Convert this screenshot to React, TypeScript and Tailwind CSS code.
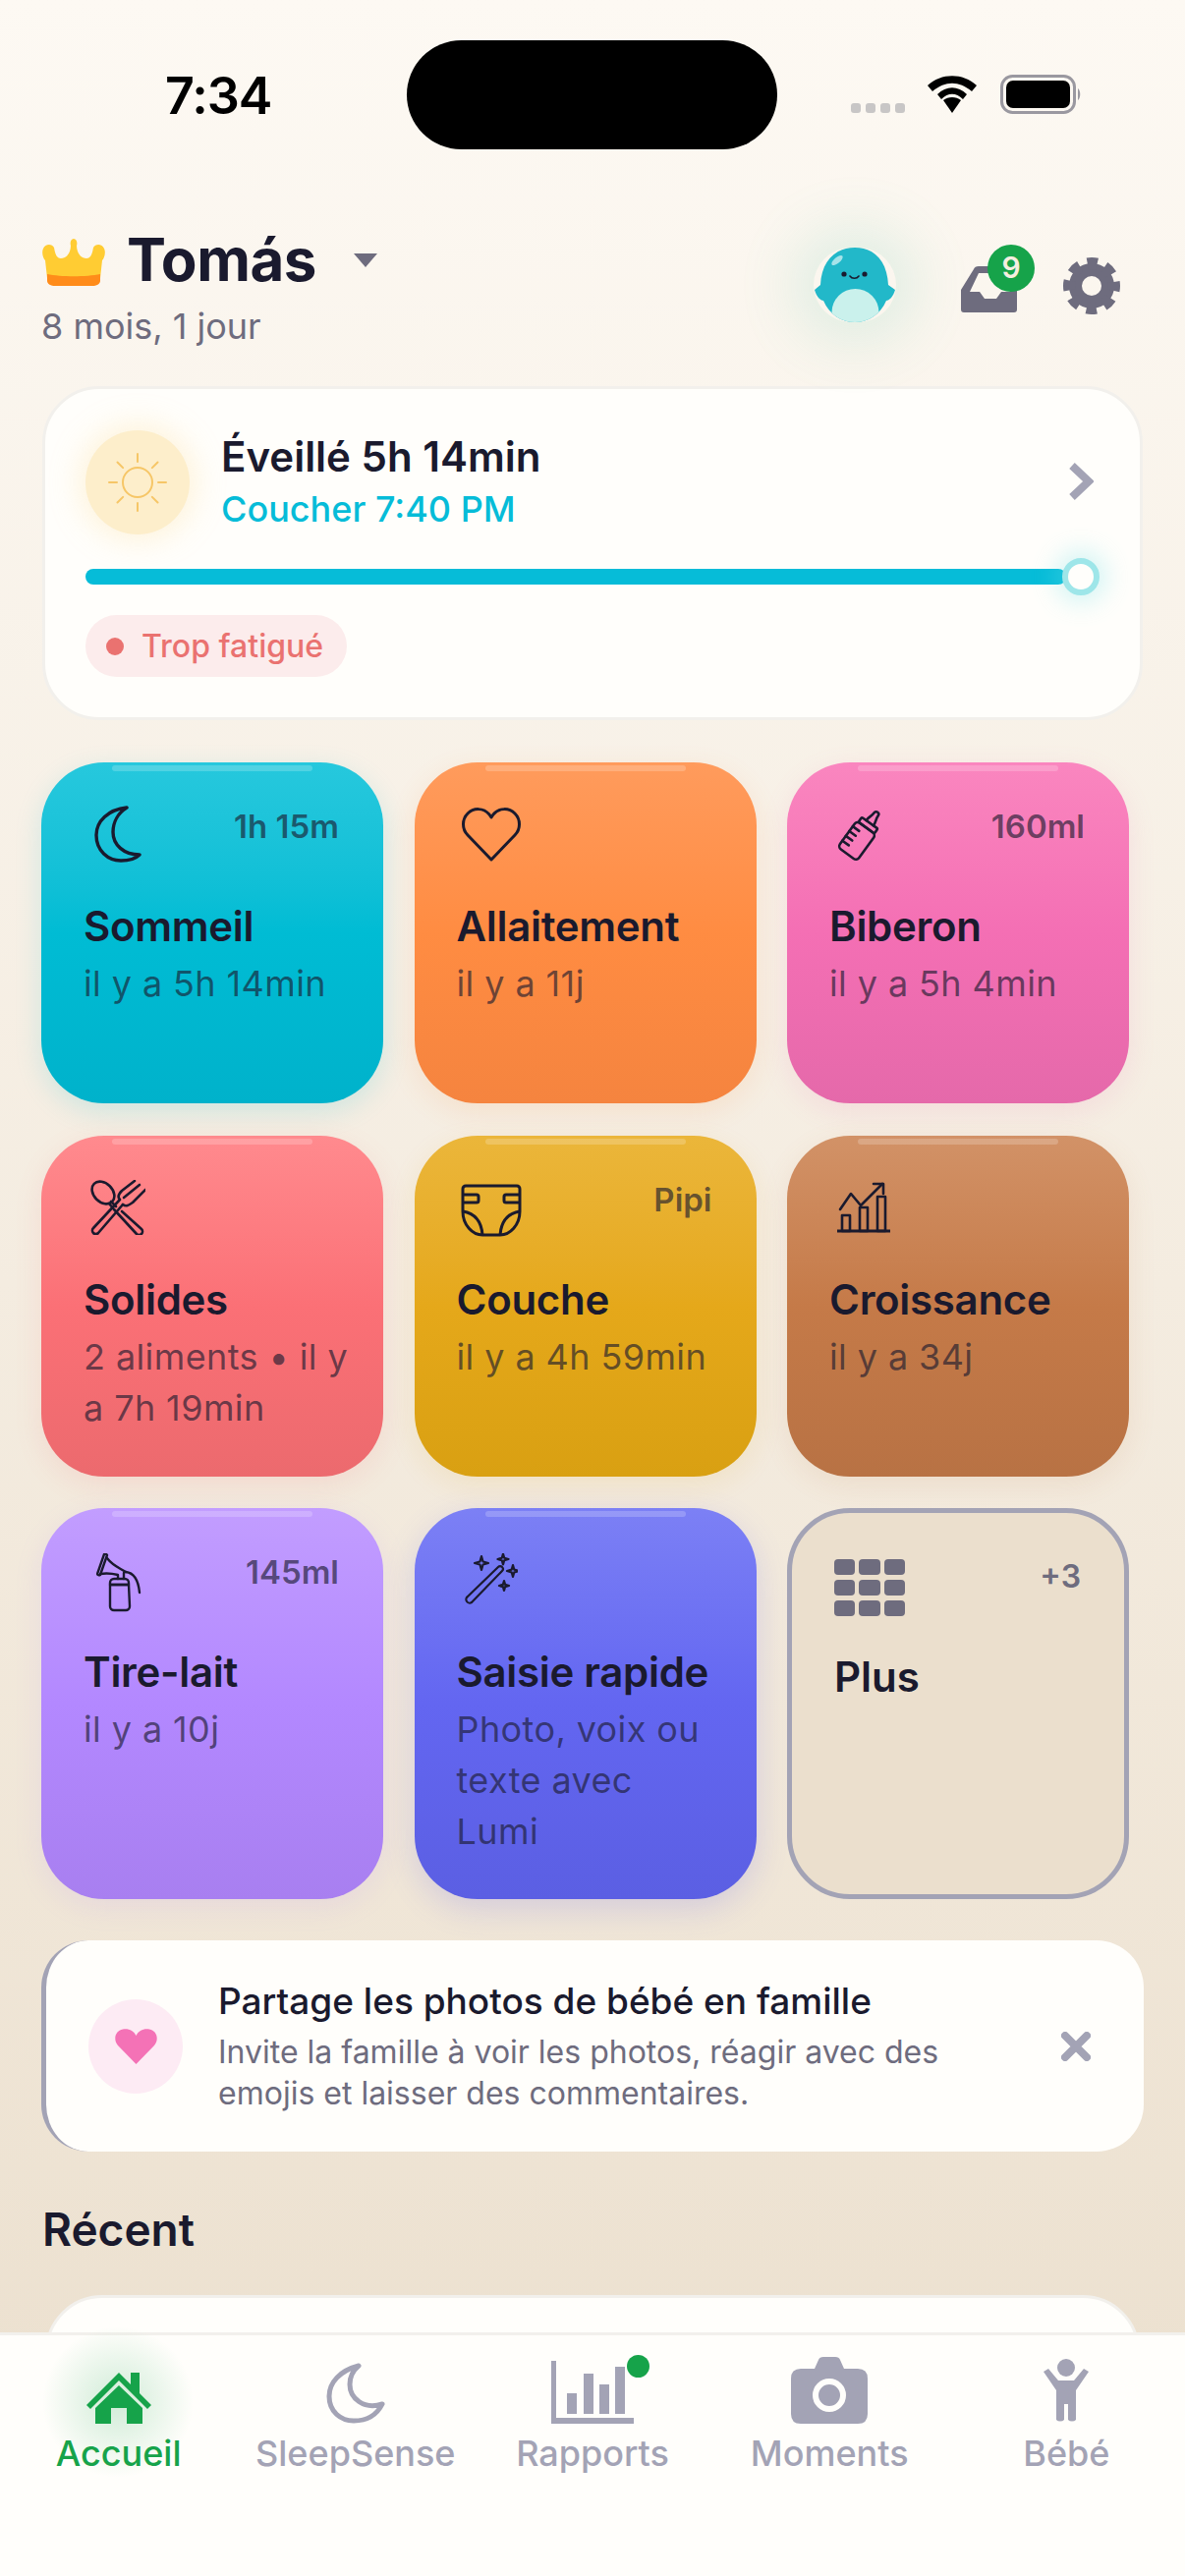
import React from 'react';

const ink = '#1a1a2e';

function Wifi() {
  return (
    <svg width="50" height="38" viewBox="0 0 50 38">
      <path d="M25 38 L16 25 C21 21 29 21 34 25 Z" fill="#000" />
      <path d="M10 19 C19 10 31 10 40 19 L36 24 C29 17 21 17 14 24 Z" fill="#000" />
      <path d="M0 10 C14 -3 36 -3 50 10 L45 16 C32 5 18 5 5 16 Z" fill="#000" />
    </svg>
  );
}

function Battery() {
  return (
    <svg width="82" height="40" viewBox="0 0 82 40">
      <rect x="1.5" y="1.5" width="74" height="37" rx="11" fill="none" stroke="#9a98a0" strokeWidth="3" />
      <rect x="6" y="6" width="65" height="28" rx="7" fill="#000" />
      <path d="M79 14 C82 16 82 24 79 26 Z" fill="#9a98a0" />
    </svg>
  );
}

function Crown() {
  return (
    <svg width="66" height="48" viewBox="0 0 66 48">
      <path d="M33 0 C36 0 37 4 36 7 C36 14 40 20 46 20 C51 20 52 14 53 9 C55 5 62 5 64 10 C66 14 64 20 62 22 L60 40 H6 L4 22 C2 20 0 14 2 10 C4 5 11 5 13 9 C14 14 15 20 20 20 C26 20 30 14 30 7 C29 4 30 0 33 0 Z" fill="#ffcc33" />
      <path d="M6 36 C20 39 46 39 60 36 L60 43 C60 46 56 48 52 48 H14 C10 48 6 46 6 43 Z" fill="#ff8c1a" />
    </svg>
  );
}

function Mascot() {
  return (
    <svg width="84" height="76" viewBox="0 0 84 76">
      <defs>
        <clipPath id="mascot-body">
          <path d="M42 0 C22 0 8 14 7 38 L1 43 C3 50 7 54 10 54 C16 68 28 76 42 76 C56 76 68 68 74 54 C77 54 81 50 83 43 L76 38 C75 14 62 0 42 0 Z" />
        </clipPath>
      </defs>
      <path d="M42 0 C22 0 8 14 7 38 L1 43 C3 50 7 54 10 54 C16 68 28 76 42 76 C56 76 68 68 74 54 C77 54 81 50 83 43 L76 38 C75 14 62 0 42 0 Z" fill="#22b8c9" />
      <ellipse cx="42.5" cy="66" rx="24" ry="24" fill="#caf1ec" clipPath="url(#mascot-body)" />
      <ellipse cx="24" cy="13" rx="7" ry="3" transform="rotate(-40 24 13)" fill="#ffffff" opacity="0.6" />
      <circle cx="31" cy="27" r="2.6" fill={ink} />
      <circle cx="52" cy="27" r="2.6" fill={ink} />
      <path d="M37 29 C39 32 44 32 46 29" fill="none" stroke={ink} strokeWidth="1.6" strokeLinecap="round" />
    </svg>
  );
}

function Inbox() {
  return (
    <svg width="57" height="47" viewBox="0 0 57 47">
      <path
        fillRule="evenodd"
        d="M13 3 Q14 0 18 0 H45 Q50 0 52 3 L57 22 V44 Q57 47 54 47 H3 Q0 47 0 44 V24 Z M9 26 H19 L24 33 H36 L41 26 H50 L45 7 H18 Z"
        fill="#6e6c7e"
      />
    </svg>
  );
}

function Gear() {
  return (
    <svg width="58" height="58" viewBox="0 0 58 58">
      <circle cx="29" cy="29" r="16.5" fill="none" stroke="#6e6c7e" strokeWidth="13" />
      <circle cx="29" cy="29" r="23" fill="none" stroke="#6e6c7e" strokeWidth="12" strokeDasharray="10 8.06" strokeDashoffset="5" />
    </svg>
  );
}

function Sun() {
  const rays = [0, 45, 90, 135, 180, 225, 270, 315];
  return (
    <svg width="60" height="60" viewBox="0 0 60 60" fill="none" stroke="#f6c667" strokeWidth="2" strokeLinecap="round">
      <circle cx="30" cy="30" r="15" />
      {rays.map((r) => (
        <line key={r} x1="30" y1="9" x2="30" y2="1" transform={`rotate(${r} 30 30)`} />
      ))}
    </svg>
  );
}

function Moon() {
  return (
    <svg width="48" height="58" viewBox="0 0 48 58" fill="none" stroke={ink} strokeWidth="3.4" strokeLinejoin="round">
      <path d="M33 2 C14 4 2 16 2 30 C2 46 14 56 27 56 C35 56 42 54 46 50 C30 50 19 40 19 27 C19 16 25 7 33 2 Z" />
    </svg>
  );
}

function Heart() {
  return (
    <svg width="62" height="56" viewBox="0 0 62 56" fill="none" stroke={ink} strokeWidth="3" strokeLinejoin="round">
      <path d="M31 54 L7 29 C1 23 1 13 7 7 C13 1 23 1 29 8 L31 11 L33 8 C39 1 49 1 55 7 C61 13 61 23 55 29 Z" />
    </svg>
  );
}

function Bottle() {
  return (
    <svg width="50" height="56" viewBox="0 0 50 56" fill="none" stroke={ink} strokeWidth="2.6" strokeLinecap="round" strokeLinejoin="round">
      <g transform="rotate(36 25 28)">
        <rect x="13" y="20" width="24" height="33" rx="4" />
        <rect x="15" y="14" width="20" height="6" rx="1.5" />
        <path d="M20.5 14 C20.5 9 22.5 8 22.5 3 a2.5 2.5 0 0 1 5 0 C27.5 8 29.5 9 29.5 14" />
        <path d="M13 27 h8 M13 33 h8 M13 39 h8 M13 45 h8" />
      </g>
    </svg>
  );
}

function Cutlery() {
  return (
    <svg width="56" height="56" viewBox="0 0 56 56" fill="none" stroke={ink} strokeWidth="2.6" strokeLinecap="round" strokeLinejoin="round">
      <ellipse cx="13" cy="13" rx="13" ry="9.5" transform="rotate(45 13 13)" />
      <path d="M21 22 L26 27 M32 32 L52 50 a3 3 0 0 1 -5 5 L24 30 L19 24" />
      <path d="M33 25 L8 54 a3 3 0 0 1 -5 -5 L30 20 C27 17 29 14 32 11 L45 1" />
      <path d="M33 25 C37 28 40 25 43 23 L56 10" />
      <path d="M34 18 L50 5" />
    </svg>
  );
}

function Diaper() {
  return (
    <svg width="62" height="54" viewBox="0 0 62 54" fill="none" stroke={ink} strokeWidth="3" strokeLinejoin="round">
      <path d="M5 2 H57 a3 3 0 0 1 3 3 V28 C60 42 50 52 40 52 H22 C12 52 2 42 2 28 V5 a3 3 0 0 1 3 -3 Z" />
      <path d="M2 11 H16 a2 2 0 0 1 2 2 V17 a2 2 0 0 1 -2 2 H2" />
      <path d="M60 11 H46 a2 2 0 0 0 -2 2 V17 a2 2 0 0 0 2 2 H60" />
      <path d="M2 28 C14 30 21 38 22 52" />
      <path d="M60 28 C48 30 41 38 40 52" />
    </svg>
  );
}

function Growth() {
  return (
    <svg width="54" height="52" viewBox="0 0 54 52" fill="none" stroke={ink} strokeWidth="2.6" strokeLinecap="round" strokeLinejoin="round">
      <path d="M0 50 H54" strokeWidth="3" />
      <rect x="5" y="34" width="8" height="16" />
      <rect x="23" y="26" width="8" height="24" />
      <rect x="41" y="15" width="8" height="35" />
      <path d="M3 28 L14 12 L24 24 L46 2" />
      <path d="M37 2 H47 V12" />
    </svg>
  );
}

function Pump() {
  return (
    <svg width="46" height="60" viewBox="0 0 46 60" fill="none" stroke={ink} strokeWidth="2.4" strokeLinecap="round" strokeLinejoin="round">
      <path d="M8 1 a2 2 0 0 1 3 1 L4 22 a2 2 0 0 1 -3 -1 Z" />
      <path d="M11 5 C17 13 24 15 30 19 M4 21 C10 20 18 21 22 22 V26" />
      <path d="M30 19 C40 20 43 30 44 40 M28 26 V20" />
      <path d="M18 26 H29 a4 4 0 0 1 4 4 V32 H14 V30 a4 4 0 0 1 4 -4 Z" />
      <path d="M14 32 H33 L34 54 a4 4 0 0 1 -4 4 H18 a4 4 0 0 1 -4 -4 Z" />
    </svg>
  );
}

function Wand() {
  const star = (x: number, y: number, s: number) => {
    const k = s * 0.22;
    return `M${x} ${y - s} L${x + k} ${y - k} L${x + s} ${y} L${x + k} ${y + k} L${x} ${y + s} L${x - k} ${y + k} L${x - s} ${y} L${x - k} ${y - k} Z`;
  };
  return (
    <svg width="54" height="52" viewBox="0 0 54 52" fill="none" stroke={ink} strokeWidth="2.2" strokeLinejoin="round">
      <path d="M3 44 L34 14 a2.6 2.6 0 0 1 4 4 L7 50 a2.6 2.6 0 0 1 -4 -6 Z" />
      <path d={star(17, 10, 7)} />
      <path d={star(39, 6, 5.5)} />
      <path d={star(49, 18, 6)} />
      <path d={star(40, 33, 5)} />
    </svg>
  );
}

function MoreGrid() {
  const cells = Array.from({ length: 9 });
  return (
    <div className="grid w-[72px] grid-cols-3 gap-x-[4px] gap-y-[5px]">
      {cells.map((_, i) => (
        <div key={i} className="h-[16px] rounded-[4px] bg-[#6e6c7e]" />
      ))}
    </div>
  );
}

function Tile({ icon, iconClassName, badge, title, sub, className }: { icon: React.ReactNode; iconClassName: string; badge?: string; title: string; sub: string; className: string }) {
  return (
    <div className={`relative flex flex-col rounded-[64px] bg-gradient-to-b pl-[43px] pr-[30px] pt-[42px] ${className}`}>
      <div className="absolute left-[72px] top-[3px] h-[6px] w-[204px] rounded-[3px] bg-white/20" />
      <div className="mb-[37px] flex h-[62px] items-start justify-between">
        <div className="flex h-[62px] items-center">
          <div className={iconClassName}>{icon}</div>
        </div>
        {badge && <span className="mr-[15px] pt-[5px] text-[33px] font-semibold leading-[36px] text-[#1a1a2e]/65">{badge}</span>}
      </div>
      <div className="text-[42px] font-semibold leading-[52px] tracking-[-0.3px] text-[#1a1a2e]">{title}</div>
      <div className="mt-[6px] max-w-[270px] text-[36px] leading-[52px] tracking-[0.4px] text-[#1a1a2e]/65">{sub}</div>
    </div>
  );
}

function TabItem({ icon, label, active }: { icon: React.ReactNode; label: string; active?: boolean }) {
  return (
    <div className="flex flex-col items-center">
      <div className="flex h-[78px] items-end">{icon}</div>
      <span className={`mt-[8px] text-[36px] font-medium leading-[44px] ${active ? 'text-[#16a34a]' : 'text-[#a3a3b5]'}`}>{label}</span>
    </div>
  );
}

export default function App() {
  return (
    <div className="relative h-[2622px] w-[1206px] overflow-hidden bg-gradient-to-b from-[#fdf9f3] to-[#ebdfcd] font-['Inter',sans-serif] text-[#1a1a2e]">
      {/* status bar */}
      <div className="flex h-[152px] items-start pt-[41px]">
        <div className="w-[414px] pl-[168px] pt-[29px] text-[52px] font-semibold leading-[56px] tracking-[-1px] text-black">7:34</div>
        <div className="h-[111px] w-[377px] rounded-[56px] bg-black" />
        <div className="flex items-center pl-[75px] pt-[35px]">
          <div className="mt-[27px] flex gap-[5px]">
            <div className="h-[10px] w-[10px] rounded-[3px] bg-[#c8c6c6]" />
            <div className="h-[10px] w-[10px] rounded-[3px] bg-[#c8c6c6]" />
            <div className="h-[10px] w-[10px] rounded-[3px] bg-[#c8c6c6]" />
            <div className="h-[10px] w-[10px] rounded-[3px] bg-[#c8c6c6]" />
          </div>
          <div className="ml-[23px]"><Wifi /></div>
          <div className="ml-[24px]"><Battery /></div>
        </div>
      </div>

      {/* header */}
      <div className="flex h-[241px] items-start justify-between pl-[42px] pr-[66px] pt-[82px]">
        <div>
          <div className="flex h-[66px] items-center">
            <Crown />
            <span className="ml-[21px] mt-[-6px] text-[60px] font-bold leading-[66px] tracking-[-0.5px]">Tomás</span>
            <svg className="ml-[38px] mt-[-4px]" width="24" height="14" viewBox="0 0 24 14"><path d="M0 0 H24 L12 14 Z" fill="#6e6c7e" /></svg>
          </div>
          <div className="mt-[10px] text-[36px] leading-[44px] text-[#6e6c7e]">8 mois, 1 jour</div>
        </div>
        <div className="flex items-center pt-[18px]">
          <div className="rounded-full shadow-[0_0_60px_20px_rgba(80,200,170,0.16)]"><Mascot /></div>
          <div className="relative ml-[66px] mt-[8px]">
            <Inbox />
            <div className="absolute left-[27px] top-[-22px] flex h-[48px] w-[48px] items-center justify-center rounded-full bg-[#16a34a] text-[30px] font-semibold text-[#f5eee0]">9</div>
          </div>
          <div className="ml-[47px] mt-[2px]"><Gear /></div>
        </div>
      </div>

      {/* wake window */}
      <div className="ml-[43px] h-[340px] w-[1120px] rounded-[58px] border-[3px] border-[#f2f0ec] bg-[#fffefb] pl-[41px] pr-[26px] pt-[42px]">
        <div className="flex items-center">
          <div className="flex h-[106px] w-[106px] items-center justify-center rounded-full bg-[#fdeecb] shadow-[0_0_30px_6px_rgba(253,224,160,0.35)]"><Sun /></div>
          <div className="ml-[32px] flex-1">
            <div className="text-[42px] font-semibold leading-[52px]">Éveillé 5h 14min</div>
            <div className="mt-[2px] text-[36px] font-medium leading-[50px] text-[#06bcd8]">Coucher 7:40 PM</div>
          </div>
          <svg className="mb-[2px] mr-[21px]" width="26" height="38" viewBox="0 0 26 38"><path d="M4 3 L21 19 L4 35" fill="none" stroke="#a3a3b5" strokeWidth="8" /></svg>
        </div>
        <div className="relative mt-[35px] h-[16px] w-[998px] rounded-full bg-[#06bcd8]">
          <div className="absolute right-[-34px] top-[-11px] h-[38px] w-[38px] rounded-full border-[6px] border-[#9ee6e9] bg-[#fffefb] shadow-[0_0_24px_8px_rgba(120,225,235,0.3)]" />
        </div>
        <div className="mt-[31px] flex h-[63px] w-[266px] items-center rounded-full bg-[#fcecec] pl-[21px]">
          <div className="h-[18px] w-[18px] rounded-full bg-[#ea7270]" />
          <span className="ml-[18px] text-[32px] font-medium text-[#ea7270]">Trop fatigué</span>
        </div>
      </div>

      {/* action tiles */}
      <div className="ml-[42px] mt-[43px] grid w-[1107px] grid-cols-[348px_348px_348px] grid-rows-[347px_347px_398px] gap-x-[31.5px] gap-y-[32.5px]">
        <Tile icon={<Moon />} iconClassName="ml-[11px]" badge="1h 15m" title="Sommeil" sub="il y a 5h 14min" className="from-[#26c8dd] via-[#00bcd4] to-[#00b2cb] shadow-[0_8px_28px_rgba(0,188,212,0.16)]" />
        <Tile icon={<Heart />} iconClassName="ml-[4px]" title="Allaitement" sub="il y a 11j" className="from-[#ff9b5c] via-[#ff8c42] to-[#f5843f] shadow-[0_8px_28px_rgba(255,140,66,0.14)]" />
        <Tile icon={<Bottle />} iconClassName="ml-[8px]" badge="160ml" title="Biberon" sub="il y a 5h 4min" className="from-[#fa86bf] via-[#f46fb4] to-[#e569aa] shadow-[0_8px_28px_rgba(244,111,180,0.14)]" />
        <Tile icon={<Cutlery />} iconClassName="ml-[7px]" title="Solides" sub="2 aliments • il y a 7h 19min" className="from-[#ff8a8e] via-[#fb7076] to-[#ec6a6e] shadow-[0_8px_28px_rgba(251,112,118,0.14)]" />
        <Tile icon={<Diaper />} iconClassName="ml-[4px] mt-[6px]" badge="Pipi" title="Couche" sub="il y a 4h 59min" className="from-[#ebb63a] via-[#e5a81a] to-[#d9a012] shadow-[0_8px_28px_rgba(229,168,26,0.12)]" />
        <Tile icon={<Growth />} iconClassName="ml-[8px]" title="Croissance" sub="il y a 34j" className="from-[#d29267] via-[#c57a48] to-[#b87244] shadow-[0_8px_28px_rgba(197,122,72,0.12)]" />
        <Tile icon={<Pump />} iconClassName="ml-[13px] mt-[6px]" badge="145ml" title="Tire-lait" sub="il y a 10j" className="from-[#c29dff] via-[#b388ff] to-[#a87ff0] shadow-[0_8px_28px_rgba(179,136,255,0.14)]" />
        <Tile icon={<Wand />} iconClassName="ml-[8px] mb-[2px]" title="Saisie rapide" sub="Photo, voix ou texte avec Lumi" className="from-[#7c80f5] via-[#6366f1] to-[#5b5fe3] shadow-[0_10px_32px_rgba(99,102,241,0.2)]" />
        <div className="flex flex-col rounded-[64px] border-[5px] border-[#a3a3b5] bg-[#ebdfcd] pl-[43px] pr-[44px] pt-[47px]">
          <div className="flex h-[57px] items-start justify-between">
            <MoreGrid />
            <span className="text-[32px] font-semibold leading-[36px] text-[#6e6c7e]">+3</span>
          </div>
          <div className="mt-[37px] text-[42px] font-semibold leading-[52px]">Plus</div>
        </div>
      </div>

      {/* family photos promo */}
      <div className="ml-[42px] mt-[42px] flex h-[215px] w-[1122px] items-center rounded-[48px] border-l-[5px] border-[#a3a3b5] bg-[#fffefb] pl-[43px] pr-[54px]">
        <div className="flex h-[96px] w-[96px] shrink-0 items-center justify-center rounded-full bg-[#fdebf4]">
          <svg width="43" height="36" viewBox="0 0 43 36"><path d="M21.5 36 L3 17 C-2 11 0 2 8 0.5 C14 -0.5 19 2 21.5 7 C24 2 29 -0.5 35 0.5 C43 2 45 11 40 17 Z" fill="#f472b6" /></svg>
        </div>
        <div className="ml-[36px] flex-1">
          <div className="text-[37px] font-medium leading-[46px]">Partage les photos de bébé en famille</div>
          <div className="mt-[8px] w-[760px] text-[32px] leading-[42px] text-[#6e6c7e]">Invite la famille à voir les photos, réagir avec des emojis et laisser des commentaires.</div>
        </div>
        <svg width="30" height="30" viewBox="0 0 30 30"><path d="M4 4 L26 26 M26 4 L4 26" fill="none" stroke="#a3a3b5" strokeWidth="8" strokeLinecap="round" /></svg>
      </div>

      {/* recent */}
      <div className="ml-[43px] mt-[51px] text-[46px] font-semibold leading-[56px]">Récent</div>
      <div className="ml-[46px] mt-[39px] h-[200px] w-[1114px] rounded-[58px] border-[3px] border-[#f2f0ec] bg-[#fffefb]" />

      {/* tab bar */}
      <div className="absolute bottom-0 left-0 grid h-[248px] w-full grid-cols-5 border-t-[3px] border-[#f2f0ec] bg-[#fffefb] pt-[12px]">
        <div className="absolute left-[40px] top-[-12px] h-[160px] w-[160px] bg-[radial-gradient(circle,rgba(22,163,74,0.2),transparent_68%)]" />
        <div className="relative">
          <TabItem
            active
            label="Accueil"
            icon={
              <svg width="66" height="52" viewBox="0 0 66 52" fill="#16a34a">
                <path d="M33 0 L45 12 V0 H54 V21 L66 33 L62 37 L33 8 L4 37 L0 33 Z" />
                <path d="M33 13 L57 36 V52 H41 V36 H25 V52 H9 V36 Z" />
              </svg>
            }
          />
        </div>
        <TabItem
          label="SleepSense"
          icon={
            <svg width="60" height="62" viewBox="0 0 60 62" fill="none" stroke="#a3a3b5" strokeWidth="5" strokeLinejoin="round">
              <path d="M33 3 C14 8 3 20 3 34 C3 50 15 59 28 59 C41 59 51 54 57 42 C38 48 24 36 24 22 C24 14 27 8 33 3 Z" />
            </svg>
          }
        />
        <div className="relative">
          <TabItem
            label="Rapports"
            icon={
              <svg width="84" height="64" viewBox="0 0 84 64" fill="#a3a3b5">
                <path d="M0 0 H5 V58 H84 V64 H0 Z" />
                <rect x="16" y="33" width="10" height="21" />
                <rect x="33" y="13" width="10" height="41" />
                <rect x="49" y="24" width="10" height="30" />
                <rect x="65" y="6" width="10" height="48" />
              </svg>
            }
          />
          <div className="absolute left-[156px] top-[8px] h-[23px] w-[23px] rounded-full bg-[#16a34a]" />
        </div>
        <TabItem
          label="Moments"
          icon={
            <svg width="78" height="68" viewBox="0 0 78 68">
              <path fillRule="evenodd" d="M24 12 L28 3 Q29 0 33 0 H45 Q49 0 50 3 L54 12 H68 Q78 12 78 22 V58 Q78 68 68 68 H10 Q0 68 0 58 V22 Q0 12 10 12 Z" fill="#a3a3b5" />
              <circle cx="39" cy="39" r="14" fill="#a3a3b5" stroke="#fffefb" strokeWidth="6" />
            </svg>
          }
        />
        <TabItem
          label="Bébé"
          icon={
            <svg width="46" height="66" viewBox="0 0 46 66" fill="#a3a3b5">
              <circle cx="23" cy="9" r="9" />
              <path d="M0 13 L5 10 L15 22 H31 L41 10 L46 13 L33 32 V62 a5 4 0 0 1 -8 0 V46 H21 V62 a5 4 0 0 1 -8 0 V32 Z" />
            </svg>
          }
        />
      </div>
    </div>
  );
}
